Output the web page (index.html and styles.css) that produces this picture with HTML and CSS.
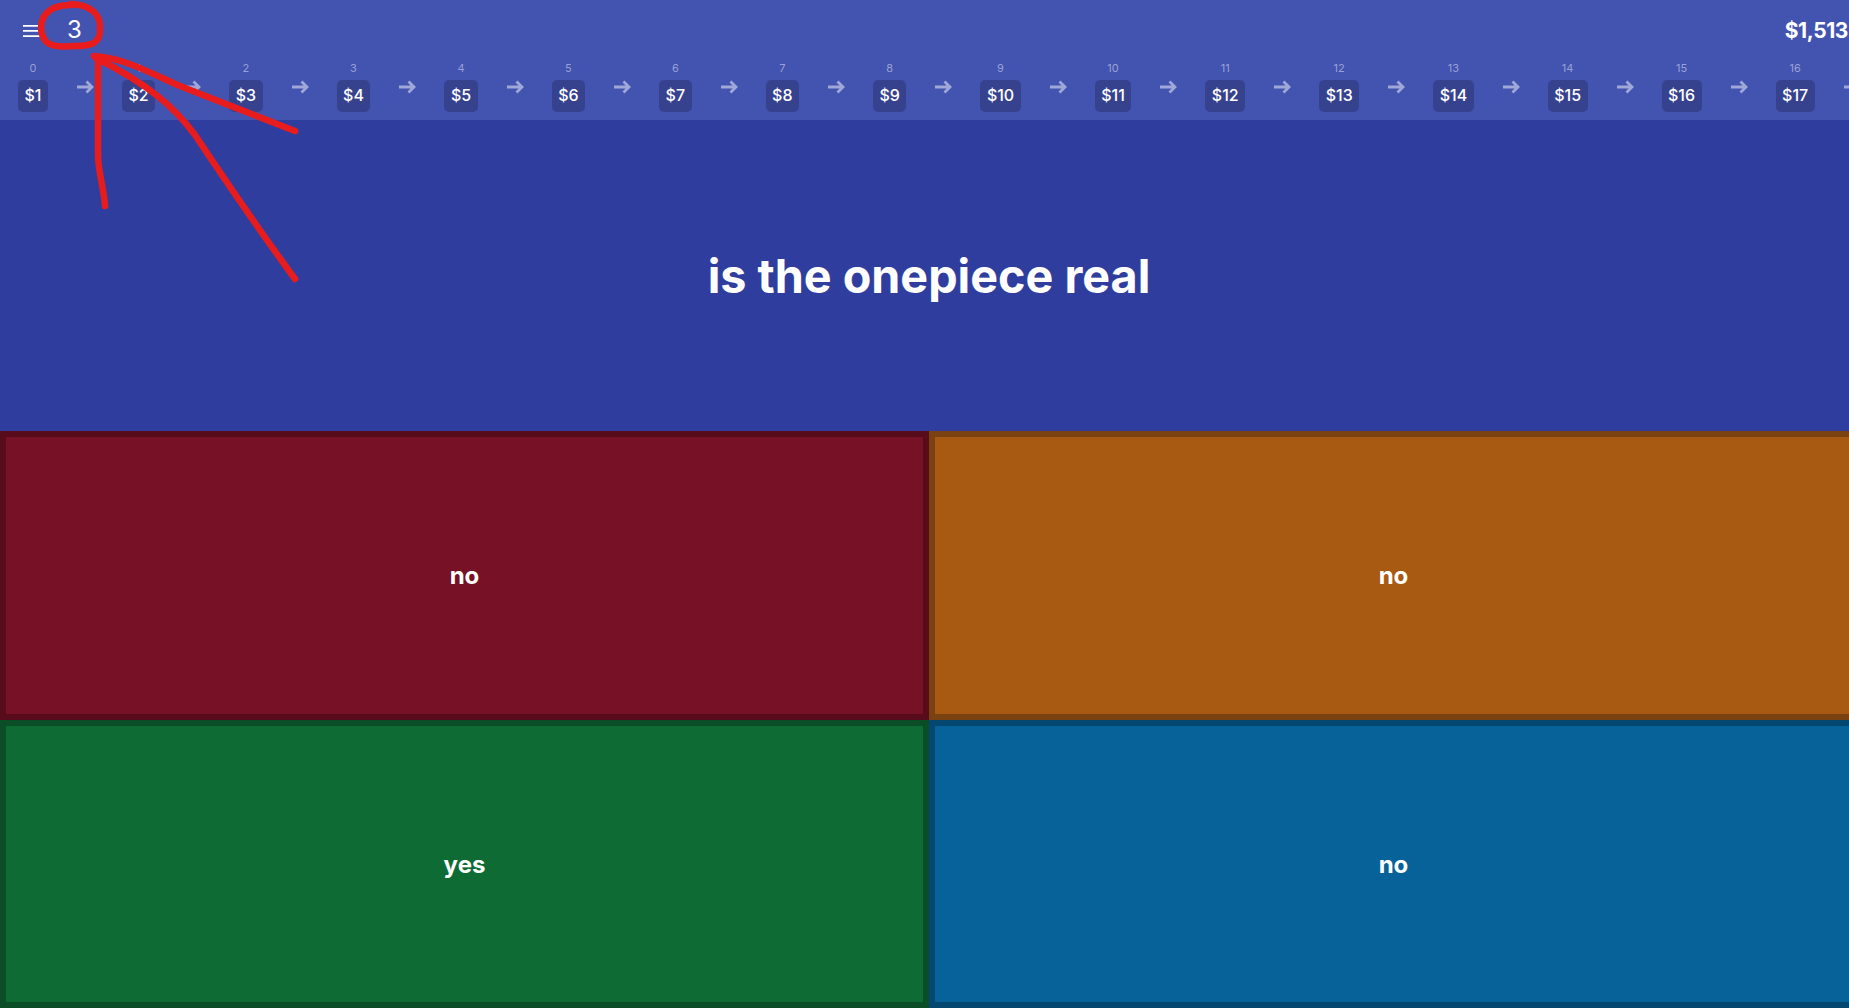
FILE: index.html
```html
<!DOCTYPE html>
<html lang="en">
<head>
<meta charset="utf-8">
<title>is the onepiece real</title>
<link rel="stylesheet" href="styles.css">
</head>
<body>
<main class="page">
  <header class="top">
    <div class="head">
      <svg class="menu" viewBox="0 0 18 12" aria-hidden="true"><path d="M0 0h18v1.7H0zM0 5.1h18v1.7H0zM0 10.2h18v1.7H0z"/></svg>
      <span class="streak">3</span>
      <span class="money">$1,513</span>
    </div>
    <div class="ladder">
      <div class="rung"><span class="idx">0</span><span class="val">$1</span></div>
      <svg class="arrow" viewBox="0 0 24 24"><path d="M4 12H19M13.5 6.5L19 12l-5.500 5.500"/></svg>
      <div class="rung"><span class="idx">1</span><span class="val">$2</span></div>
      <svg class="arrow" viewBox="0 0 24 24"><path d="M4 12H19M13.5 6.5L19 12l-5.500 5.500"/></svg>
      <div class="rung"><span class="idx">2</span><span class="val">$3</span></div>
      <svg class="arrow" viewBox="0 0 24 24"><path d="M4 12H19M13.5 6.5L19 12l-5.500 5.500"/></svg>
      <div class="rung"><span class="idx">3</span><span class="val">$4</span></div>
      <svg class="arrow" viewBox="0 0 24 24"><path d="M4 12H19M13.5 6.5L19 12l-5.500 5.500"/></svg>
      <div class="rung"><span class="idx">4</span><span class="val">$5</span></div>
      <svg class="arrow" viewBox="0 0 24 24"><path d="M4 12H19M13.5 6.5L19 12l-5.500 5.500"/></svg>
      <div class="rung"><span class="idx">5</span><span class="val">$6</span></div>
      <svg class="arrow" viewBox="0 0 24 24"><path d="M4 12H19M13.5 6.5L19 12l-5.500 5.500"/></svg>
      <div class="rung"><span class="idx">6</span><span class="val">$7</span></div>
      <svg class="arrow" viewBox="0 0 24 24"><path d="M4 12H19M13.5 6.5L19 12l-5.500 5.500"/></svg>
      <div class="rung"><span class="idx">7</span><span class="val">$8</span></div>
      <svg class="arrow" viewBox="0 0 24 24"><path d="M4 12H19M13.5 6.5L19 12l-5.500 5.500"/></svg>
      <div class="rung"><span class="idx">8</span><span class="val">$9</span></div>
      <svg class="arrow" viewBox="0 0 24 24"><path d="M4 12H19M13.5 6.5L19 12l-5.500 5.500"/></svg>
      <div class="rung"><span class="idx">9</span><span class="val">$10</span></div>
      <svg class="arrow" viewBox="0 0 24 24"><path d="M4 12H19M13.5 6.5L19 12l-5.500 5.500"/></svg>
      <div class="rung"><span class="idx">10</span><span class="val">$11</span></div>
      <svg class="arrow" viewBox="0 0 24 24"><path d="M4 12H19M13.5 6.5L19 12l-5.500 5.500"/></svg>
      <div class="rung"><span class="idx">11</span><span class="val">$12</span></div>
      <svg class="arrow" viewBox="0 0 24 24"><path d="M4 12H19M13.5 6.5L19 12l-5.500 5.500"/></svg>
      <div class="rung"><span class="idx">12</span><span class="val">$13</span></div>
      <svg class="arrow" viewBox="0 0 24 24"><path d="M4 12H19M13.5 6.5L19 12l-5.500 5.500"/></svg>
      <div class="rung"><span class="idx">13</span><span class="val">$14</span></div>
      <svg class="arrow" viewBox="0 0 24 24"><path d="M4 12H19M13.5 6.5L19 12l-5.500 5.500"/></svg>
      <div class="rung"><span class="idx">14</span><span class="val">$15</span></div>
      <svg class="arrow" viewBox="0 0 24 24"><path d="M4 12H19M13.5 6.5L19 12l-5.500 5.500"/></svg>
      <div class="rung"><span class="idx">15</span><span class="val">$16</span></div>
      <svg class="arrow" viewBox="0 0 24 24"><path d="M4 12H19M13.5 6.5L19 12l-5.500 5.500"/></svg>
      <div class="rung"><span class="idx">16</span><span class="val">$17</span></div>
      <svg class="arrow" viewBox="0 0 24 24"><path d="M4 12H19M13.5 6.5L19 12l-5.500 5.500"/></svg>
    </div>
  </header>
  <section class="question"><h1>is the onepiece real</h1></section>
  <section class="answers">
    <div class="tile red">no</div>
    <div class="tile orange">no</div>
    <div class="tile green">yes</div>
    <div class="tile blue">no</div>
  </section>
</main>
<svg class="scribble" viewBox="0 0 320 300" aria-hidden="true">
  <path d="M71 5C60 5 50 8 45 15C40 22 40 32 44 39C49 47 60 47 75 46C90 46 100 44 100 30C101 15 92 5 71 4"/>
  <path d="M105 206C104 188 98 172 98 155L98 58"/>
  <path d="M295 279C265 238 225 180 195 135C175 108 150 85 96 58"/>
  <path d="M295 131L180 86C150 73 125 58 94 56"/>
</svg>
</body>
</html>
```
FILE: styles.css
```css
html, body {
  margin: 0;
  height: 100%;
  overflow: hidden;
  background: #2f3e9e;
}
body {
  font-family: "Inter", "Liberation Sans", sans-serif;
  color: #fff;
}
.page {
  width: 1858px;
  height: 1008px;
  display: flex;
  flex-direction: column;
  overflow: hidden;
}
.top {
  height: 120px;
  background: #4353b0;
  flex: none;
}
.head {
  height: 58px;
  display: flex;
  align-items: center;
  padding: 0 10px 0 23px;
}
.menu {
  width: 18px;
  height: 12px;
  fill: #fff;
  margin-top: 4px;
}
.streak {
  font-size: 24px;
  margin-left: 26px;
  width: 16px;
}
.money {
  margin-left: auto;
  margin-top: 3px;
  font-size: 21px;
  font-weight: 700;
  letter-spacing: -0.4px;
}
.ladder {
  display: flex;
  align-items: flex-start;
  padding-left: 18px;
  white-space: nowrap;
}
.rung {
  display: flex;
  flex-direction: column;
  align-items: center;
  flex: none;
}
.idx {
  height: 22px;
  line-height: 20px;
  font-size: 11px;
  color: #98a1d6;
}
.val {
  height: 32px;
  line-height: 31px;
  padding: 0 6.5px;
  border-radius: 5px;
  background: #37428f;
  font-size: 16px;
  font-weight: 500;
}
.arrow {
  width: 24px;
  height: 24px;
  margin: 17px 25px 0;
  fill: none;
  stroke: #a0a8d8;
  stroke-width: 2.8;
  flex: none;
}
.question {
  height: 311px;
  flex: none;
  display: flex;
  align-items: center;
  justify-content: center;
}
h1 {
  margin: 0;
  font-size: 46.7px;
  font-weight: 700;
}
.answers {
  flex: 1;
  display: grid;
  grid-template-columns: 1fr 1fr;
  grid-template-rows: 289px 288px;
}
.tile {
  display: flex;
  align-items: center;
  justify-content: center;
  border: 6px solid;
  font-size: 24px;
  font-weight: 700;
}
.red { background: #771226; border-color: #570b1b; }
.orange { background: #a85a12; border-color: #7a4210; }
.green { background: #0e6b33; border-color: #0a4d27; }
.blue { background: #066298; border-color: #044872; }
.scribble {
  position: absolute;
  left: 0;
  top: 0;
  width: 320px;
  height: 300px;
  fill: none;
  stroke: #e81c1c;
  stroke-width: 6.5;
  stroke-linecap: round;
  stroke-linejoin: round;
}
```
